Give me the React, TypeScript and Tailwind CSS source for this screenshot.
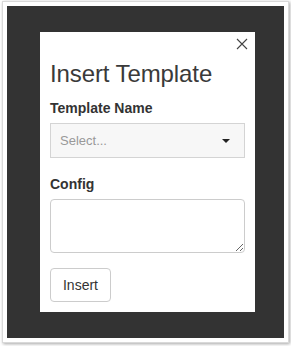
export default function App() {
  return (
    <div className="w-[291px] h-[346px] bg-white pt-[1px] pl-[2px] font-['Liberation_Sans',Arial,sans-serif] text-[#333]">
      {/* screenshot frame */}
      <div className="w-[287px] h-[342px] border border-[#d9d9d9] shadow-[1px_1px_3px_rgba(0,0,0,0.35)] p-[4px] bg-white">
        <div className="w-[277px] h-[332px] bg-[#333] pt-[26px] pl-[33px]">
          {/* modal */}
          <div className="relative w-[215px] bg-white px-[10px] pt-[30px] pb-[10px]">
            <button className="absolute right-[7px] top-[6px] w-[12px] h-[12px] flex items-center justify-center text-[#444]">
              <svg width="12" height="12" viewBox="0 0 12 12">
                <path d="M1 1 L11 11 M11 1 L1 11" stroke="#444" strokeWidth="1.1" />
              </svg>
            </button>

            <h2 className="text-[24px] leading-[24px] font-normal text-[#3a3a3a] tracking-[-0.1px]">Insert Template</h2>

            <label className="block mt-[12px] mb-[5px] text-[14px] leading-[20px] font-bold text-[#333]">
              Template Name
            </label>
            <div className="flex items-center justify-between h-[35px] border border-[#d4d4d4] bg-[#f7f7f7] pl-[9px] pr-[14px]">
              <span className="text-[13px] text-[#999]">Select...</span>
              <span className="w-0 h-0 border-l-[4px] border-r-[4px] border-t-[4px] border-l-transparent border-r-transparent border-t-[#222]" />
            </div>

            <label className="block mt-[16px] mb-[5px] text-[14px] leading-[20px] font-bold text-[#333]">
              Config
            </label>
            <textarea className="block w-full h-[54px] border border-[#ccc] rounded-[4px] bg-white" />

            <button className="mt-[15px] h-[34px] w-[61px] border border-[#ccc] rounded-[4px] bg-white text-[14px] text-[#333]">
              Insert
            </button>
          </div>
        </div>
      </div>
    </div>
  );
}
